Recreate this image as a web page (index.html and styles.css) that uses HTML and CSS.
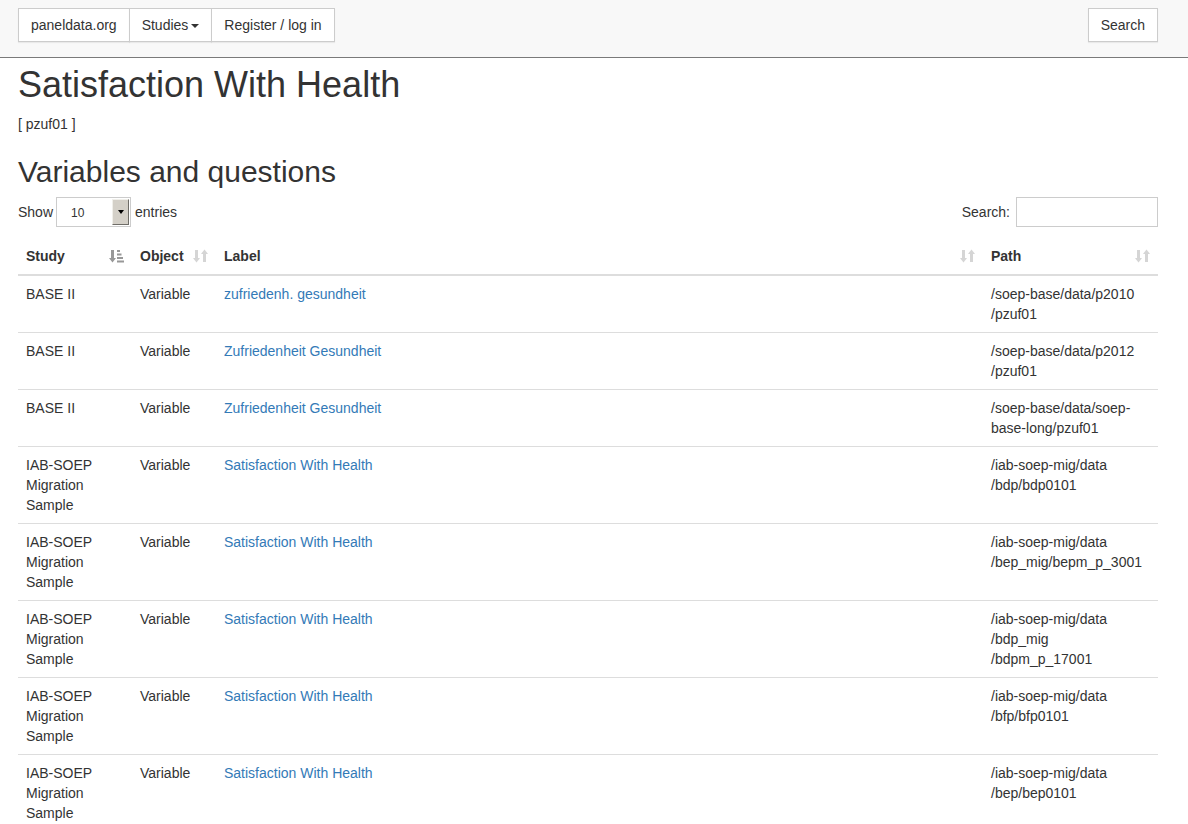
FILE: index.html
```html
<!DOCTYPE html>
<html lang="en">
<head>
<meta charset="utf-8">
<title>Satisfaction With Health</title>
<link rel="stylesheet" href="styles.css">
</head>
<body>
<nav class="navbar">
  <div class="navbar-inner">
    <div class="btn-group">
      <a class="btn" href="#">paneldata.org</a>
      <a class="btn" href="#">Studies<span class="caret"></span></a>
      <a class="btn" href="#">Register / log in</a>
    </div>
    <a class="btn btn-single" href="#">Search</a>
  </div>
</nav>

<main class="container">
  <h1 class="title">Satisfaction With Health</h1>
  <p class="ident">[ pzuf01 ]</p>

  <h2 class="subtitle">Variables and questions</h2>

  <div class="dt-controls">
    <label class="dt-length">Show
      <span class="fake-select">
        <span class="fake-select-value">10</span>
        <span class="fake-select-btn"><span class="tri"></span></span>
      </span>
      entries</label>
    <label class="dt-filter">Search: <input class="dt-input" type="search"></label>
  </div>

  <table class="table">
    <colgroup>
      <col class="col-study">
      <col class="col-object">
      <col class="col-label">
      <col class="col-path">
    </colgroup>
    <thead>
      <tr>
        <th><div class="th-inner"><span>Study</span>
          <svg class="sort-icon sorted" viewBox="0 0 15 14" width="15" height="14"><path d="M2 1h3v8h2l-3.5 4.5L0 9h2z"/><rect x="8" y="1" width="3" height="2"/><rect x="8" y="4.5" width="4.5" height="2"/><rect x="8" y="8" width="6" height="2"/><rect x="8" y="11.5" width="7" height="2"/></svg></div></th>
        <th><div class="th-inner"><span>Object</span>
          <svg class="sort-icon" viewBox="0 0 15 14" width="15" height="14"><path d="M2 1h3v8h2l-3.5 4.5L0 9h2z"/><path d="M10 13h3V5h2l-3.5-4.5L8 5h2z"/></svg></div></th>
        <th><div class="th-inner"><span>Label</span>
          <svg class="sort-icon" viewBox="0 0 15 14" width="15" height="14"><path d="M2 1h3v8h2l-3.5 4.5L0 9h2z"/><path d="M10 13h3V5h2l-3.5-4.5L8 5h2z"/></svg></div></th>
        <th><div class="th-inner"><span>Path</span>
          <svg class="sort-icon" viewBox="0 0 15 14" width="15" height="14"><path d="M2 1h3v8h2l-3.5 4.5L0 9h2z"/><path d="M10 13h3V5h2l-3.5-4.5L8 5h2z"/></svg></div></th>
      </tr>
    </thead>
    <tbody>
      <tr><td>BASE II</td><td>Variable</td><td><a href="#">zufriedenh. gesundheit</a></td><td class="path">/soep-base/data/p2010<wbr>/pzuf01</td></tr>
      <tr><td>BASE II</td><td>Variable</td><td><a href="#">Zufriedenheit Gesundheit</a></td><td class="path">/soep-base/data/p2012<wbr>/pzuf01</td></tr>
      <tr><td>BASE II</td><td>Variable</td><td><a href="#">Zufriedenheit Gesundheit</a></td><td class="path">/soep-base/data/soep-base-long<wbr>/pzuf01</td></tr>
      <tr><td>IAB-SOEP Migration Sample</td><td>Variable</td><td><a href="#">Satisfaction With Health</a></td><td class="path">/iab-soep-mig/data<wbr>/bdp/bdp0101</td></tr>
      <tr><td>IAB-SOEP Migration Sample</td><td>Variable</td><td><a href="#">Satisfaction With Health</a></td><td class="path">/iab-soep-mig/data<wbr>/bep_mig<wbr>/bepm_p_3001</td></tr>
      <tr><td>IAB-SOEP Migration Sample</td><td>Variable</td><td><a href="#">Satisfaction With Health</a></td><td class="path">/iab-soep-mig/data<wbr>/bdp_mig<wbr>/bdpm_p_17001</td></tr>
      <tr><td>IAB-SOEP Migration Sample</td><td>Variable</td><td><a href="#">Satisfaction With Health</a></td><td class="path">/iab-soep-mig/data<wbr>/bfp/bfp0101</td></tr>
      <tr><td>IAB-SOEP Migration Sample</td><td>Variable</td><td><a href="#">Satisfaction With Health</a></td><td class="path">/iab-soep-mig/data<wbr>/bep/bep0101</td></tr>
    </tbody>
  </table>
</main>
</body>
</html>
```

FILE: styles.css
```css
* { box-sizing: border-box; }

html, body {
  margin: 0;
  padding: 0;
  background: #fff;
}

body {
  font-family: "Liberation Sans", Arial, Helvetica, sans-serif;
  font-size: 14px;
  line-height: 20px;
  color: #333;
}

a { color: #337ab7; text-decoration: none; }

/* Navbar */
.navbar {
  background: #f8f8f8;
  border-bottom: 1px solid #7a7a7a;
  height: 58px;
}

.navbar-inner {
  display: flex;
  justify-content: space-between;
  align-items: flex-start;
  padding: 8px 30px 0 18px;
}

.btn-group {
  display: flex;
}

.btn {
  display: inline-block;
  height: 34px;
  padding: 6px 12px;
  font-size: 14px;
  line-height: 20px;
  color: #333;
  background: #fff;
  border: 1px solid #ccc;
  box-shadow: 0 1px 1px rgba(0, 0, 0, 0.06);
  white-space: nowrap;
}

.btn-group .btn + .btn {
  margin-left: -1px;
}

.caret {
  display: inline-block;
  width: 0;
  height: 0;
  margin-left: 3px;
  vertical-align: middle;
  border-top: 4px solid #333;
  border-left: 4px solid transparent;
  border-right: 4px solid transparent;
}

/* Content */
.container {
  padding: 0 30px 0 18px;
}

.title {
  margin: 7px 0 0;
  font-size: 36px;
  font-weight: 500;
  line-height: 40px;
}

.ident {
  margin: 9px 0 0;
}

.subtitle {
  margin: 21px 0 0;
  font-size: 30px;
  font-weight: 500;
  line-height: 33px;
}

.dt-controls {
  display: flex;
  justify-content: space-between;
  align-items: center;
  margin-top: 9px;
  height: 30px;
}

.dt-length, .dt-filter {
  display: flex;
  align-items: center;
  white-space: nowrap;
}

.fake-select {
  display: flex;
  width: 75px;
  height: 30px;
  margin: 0 4px 0 3px;
  border: 1px solid #ccc;
  background: #fff;
}

.fake-select-value {
  flex: 1;
  padding-left: 14px;
  font-size: 12px;
  line-height: 30px;
  color: #333;
}

.fake-select-btn {
  display: flex;
  align-items: center;
  justify-content: center;
  width: 17px;
  margin: 1px 1px 1px 0;
  background: #d4d0c8;
  border-top: 1px solid #f0efea;
  border-left: 1px solid #f0efea;
  border-right: 1px solid #6f6d68;
  border-bottom: 1px solid #6f6d68;
}

.tri {
  width: 0;
  height: 0;
  border-top: 4px solid #000;
  border-left: 3.5px solid transparent;
  border-right: 3.5px solid transparent;
}

.dt-input {
  width: 142px;
  height: 30px;
  margin: 0 0 0 6px;
  padding: 4px 8px;
  border: 1px solid #ccc;
  font: inherit;
}

/* Table */
.table {
  width: 100%;
  margin-top: 11px;
  border-collapse: collapse;
  table-layout: fixed;
}

.col-study { width: 114px; }
.col-object { width: 84px; }
.col-label { width: 767px; }
.col-path { width: 175px; }

.table th {
  padding: 8px;
  text-align: left;
  font-weight: bold;
  border-bottom: 2px solid #ddd;
  vertical-align: bottom;
}

.th-inner {
  display: flex;
  justify-content: space-between;
  align-items: center;
}

.sort-icon {
  fill: #333;
  opacity: 0.2;
  flex: none;
}

.sort-icon.sorted {
  opacity: 0.5;
}

.table td {
  padding: 8px;
  border-top: 1px solid #ddd;
  vertical-align: top;
}

.table td.path {
  padding-right: 10px;
}

.table tbody tr:first-child td {
  border-top: 0;
}
```
